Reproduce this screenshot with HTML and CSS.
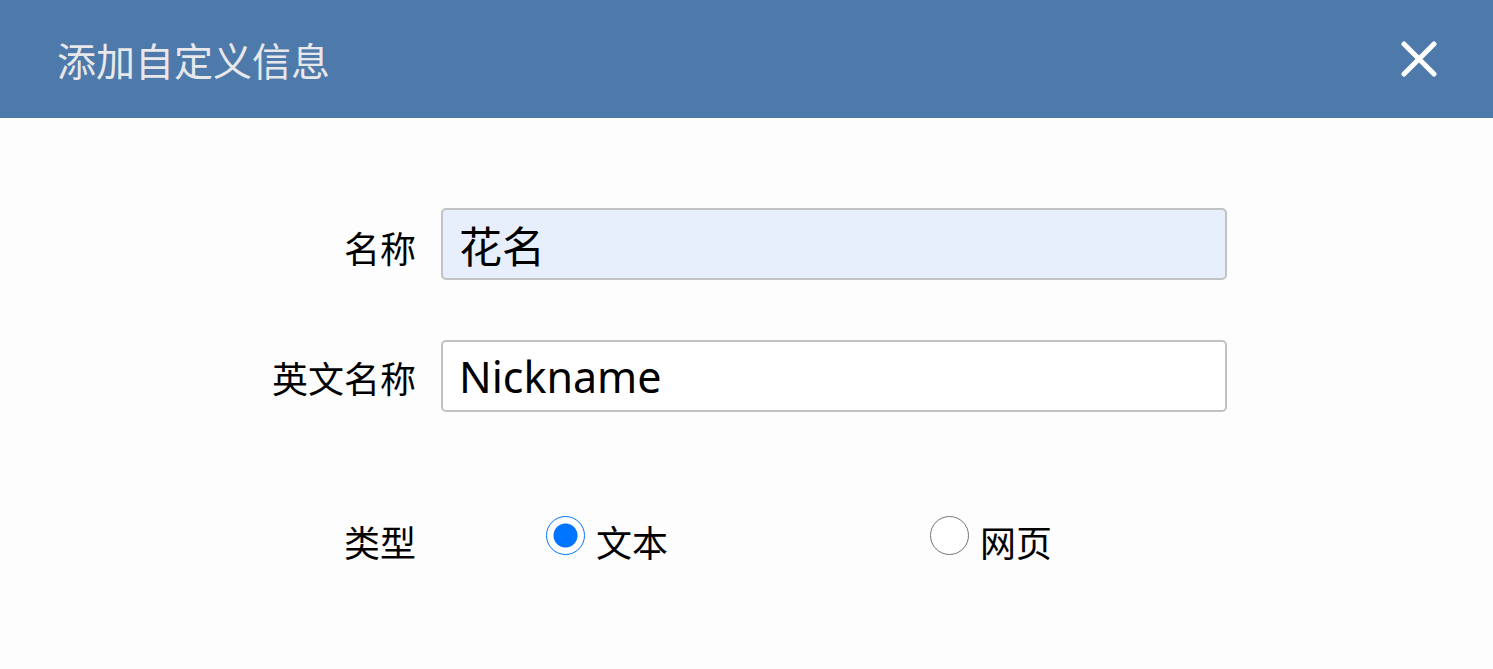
FILE: index.html
```html
<!DOCTYPE html>
<html lang="zh">
<head>
<meta charset="utf-8">
<link rel="stylesheet" href="styles.css">
</head>
<body>
<div class="dialog">
  <header class="header">
    <h1 class="title">添加自定义信息</h1>
    <button class="close" aria-label="关闭">
      <svg width="36" height="36" viewBox="0 0 36 36"><path d="M3 3 L33 33 M33 3 L3 33" stroke="#fff" stroke-width="5" stroke-linecap="round" fill="none"/></svg>
    </button>
  </header>
  <form class="form">
    <div class="row">
      <label class="label">名称</label>
      <input class="field autofill" type="text" value="花名">
    </div>
    <div class="row">
      <label class="label">英文名称</label>
      <input class="field" type="text" value="Nickname">
    </div>
    <div class="row row-radio">
      <span class="label">类型</span>
      <div class="radios">
        <label class="option"><input type="radio" name="type" checked><span>文本</span></label>
        <label class="option"><input type="radio" name="type"><span>网页</span></label>
      </div>
    </div>
  </form>
</div>
</body>
</html>
```

FILE: styles.css
```css
html, body {
  margin: 0;
  padding: 0;
  background: #fdfdfd;
  font-family: "Noto Sans", "Noto Sans CJK SC", sans-serif;
  color: #000;
}
.dialog {
  width: 1493px;
  height: 669px;
  overflow: hidden;
}
.header {
  height: 118px;
  background: #4d79ab;
  display: flex;
  align-items: center;
  justify-content: space-between;
  padding: 0 56px 0 57px;
  box-sizing: border-box;
}
.title {
  margin: 0;
  font-size: 39px;
  font-weight: normal;
  color: #e8e8ea;
}
.close {
  background: none;
  border: 0;
  padding: 0;
  width: 36px;
  height: 36px;
  display: flex;
  cursor: pointer;
}
.form {
  padding-top: 90px;
  display: flex;
  flex-direction: column;
}
.row {
  display: flex;
  align-items: baseline;
  gap: 25px;
  margin-bottom: 60px;
}
.row-radio {
  margin-top: 31px;
  align-items: center;
}
.label {
  width: 416px;
  text-align: right;
  font-size: 36px;
  flex: none;
}
.row-radio .label {
  padding-top: 12px;
}
.field {
  width: 786px;
  height: 72px;
  box-sizing: border-box;
  border: 2.5px solid #c2c2c4;
  border-radius: 5px;
  padding: 0 16px;
  font-family: "Noto Sans", "Noto Sans CJK SC", sans-serif;
  font-size: 43px;
  color: #000;
  background: #fff;
  outline: none;
}
.field.autofill {
  background: #e8effc;
}
.radios {
  display: flex;
  padding-left: 105px;
}
.option {
  display: flex;
  align-items: center;
  width: 384px;
  font-size: 36px;
}
.option span {
  padding-top: 12px;
}
.option input {
  appearance: none;
  -webkit-appearance: none;
  width: 39px;
  height: 39px;
  margin: 0 11px 0 0;
  border-radius: 50%;
  border: 1px solid #767676;
  background: #fff;
  box-sizing: border-box;
}
.option input:checked {
  border-color: #0075ff;
  background: radial-gradient(circle, #0075ff 0 11.5px, #fff 12.5px);
}
```
